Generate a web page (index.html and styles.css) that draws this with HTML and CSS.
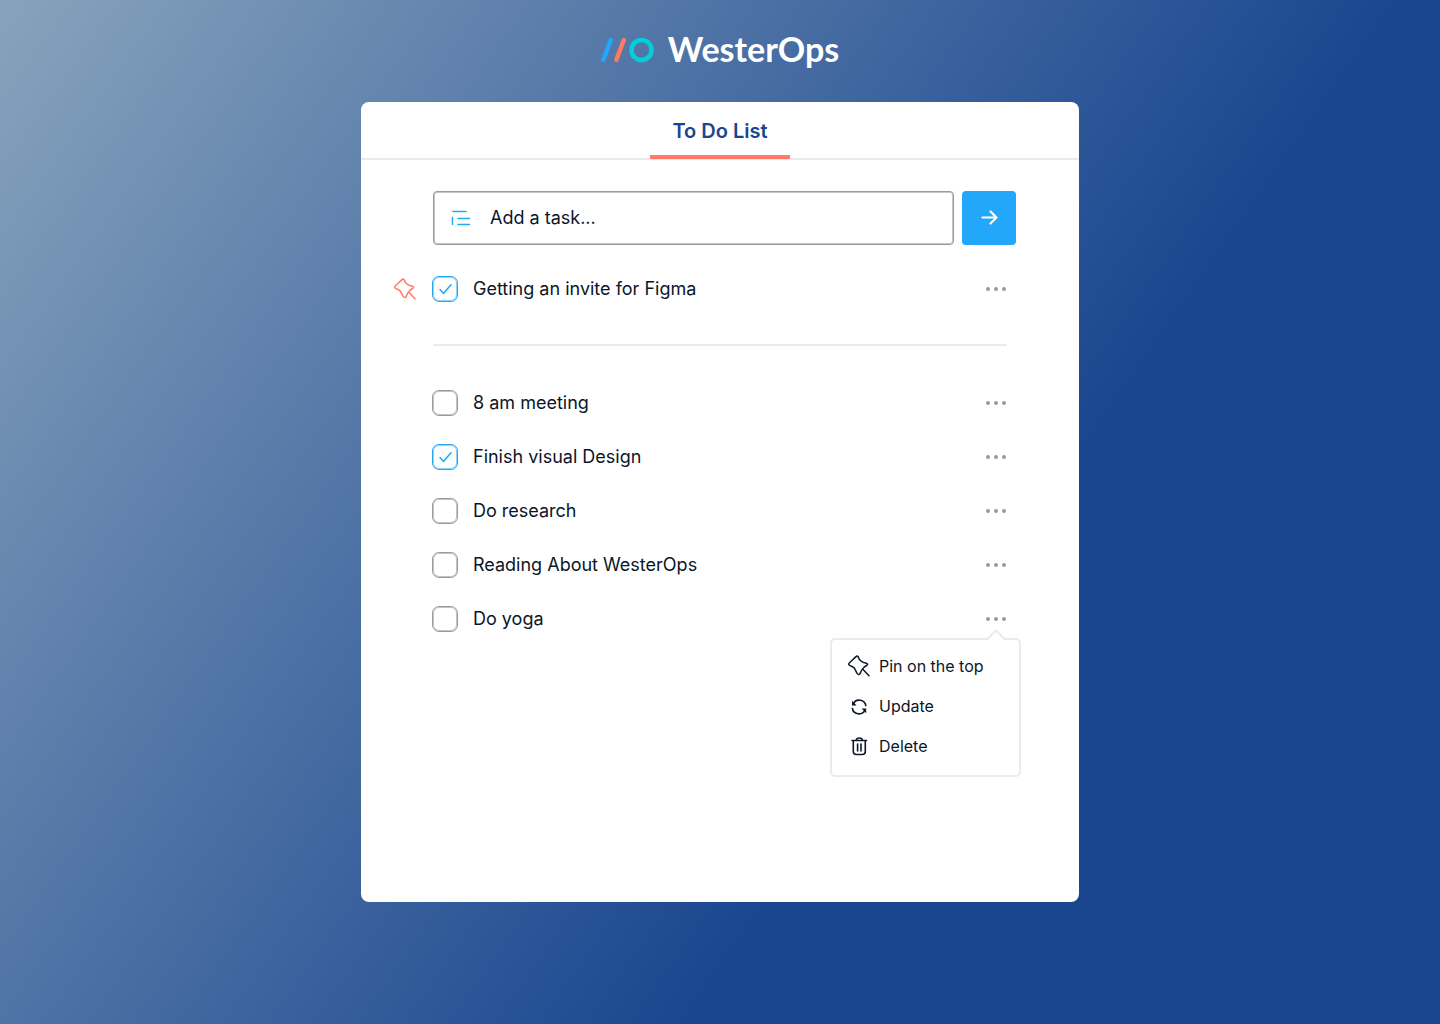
FILE: index.html
```html
<!DOCTYPE html>
<html lang="en">
<head>
<meta charset="utf-8">
<meta name="viewport" content="width=device-width, initial-scale=1">
<title>WesterOps – To Do List</title>
<link rel="stylesheet" href="styles.css">
</head>
<body>
<svg class="symbols" aria-hidden="true">
  <symbol id="pin" viewBox="0 0 24 24">
    <path d="M9 2.6C9.8 1.8 10.8 1.9 11.2 2.9C12.2 6 14 8 19.3 9.2C20.9 9.7 21 10.7 19.8 11.4L17.3 13C15.2 14.5 14.4 16.5 13.3 19.1C12.6 20.7 11.3 20.9 10.3 19.6C8.2 17 8.4 14 6 13L3.1 11.6C1.5 10.9 1.2 9.9 2.4 8.8C4.8 6.5 6.6 5 9 2.6ZM15.6 15L22 21.7" fill="none" stroke="currentColor" stroke-width="1.5" stroke-linejoin="round" stroke-linecap="round"/>
  </symbol>
  <symbol id="dots" viewBox="0 0 20 4">
    <g fill="currentColor"><circle cx="2" cy="2" r="2"/><circle cx="10" cy="2" r="2"/><circle cx="18" cy="2" r="2"/></g>
  </symbol>
</svg>

<header class="brand">
  <svg class="brand-mark" viewBox="0 0 53 26" aria-hidden="true">
    <path d="M2.4 22.8L9.8 3" stroke="#22a7fa" stroke-width="4.4" stroke-linecap="round"/>
    <path d="M15.4 22.8L22.8 3" stroke="#ff7964" stroke-width="4.4" stroke-linecap="round"/>
    <circle cx="40.5" cy="13" r="10" fill="none" stroke="#03cfdc" stroke-width="4.6"/>
  </svg>
  <span class="brand-name">WesterOps</span>
</header>

<main class="card">
  <div class="card-head"><h1 class="title">To Do List</h1></div>
  <div class="content">
    <form class="add">
      <div class="field">
        <svg class="field-icon" viewBox="0 0 20 16" aria-hidden="true"><path d="M2 1.5H15M7 8.5H18.5M7 14.5H18.5M1.5 7.5V14.5" fill="none" stroke="currentColor" stroke-width="1.5" stroke-linecap="round"/></svg>
        <input class="field-input" type="text" placeholder="Add a task..." aria-label="Add a task">
      </div>
      <button class="send" type="submit" aria-label="Add">
        <svg class="send-icon" viewBox="0 0 18 16" aria-hidden="true"><path d="M2.5 7.5H16.5M10.5 1.5L16.5 7.5L10.5 13.5" fill="none" stroke="currentColor" stroke-width="2.2" stroke-linecap="round" stroke-linejoin="round"/></svg>
      </button>
    </form>

    <ul class="tasks pinned">
      <li class="task">
        <svg class="task-pin" aria-hidden="true"><use href="#pin"/></svg>
        <label class="task-label"><input class="check" type="checkbox" checked>Getting an invite for Figma</label>
        <button class="more" type="button" aria-label="Options"><svg class="more-icon"><use href="#dots"/></svg></button>
      </li>
    </ul>

    <ul class="tasks">
      <li class="task">
        <label class="task-label"><input class="check" type="checkbox">8 am meeting</label>
        <button class="more" type="button" aria-label="Options"><svg class="more-icon"><use href="#dots"/></svg></button>
      </li>
      <li class="task">
        <label class="task-label"><input class="check" type="checkbox" checked>Finish visual Design</label>
        <button class="more" type="button" aria-label="Options"><svg class="more-icon"><use href="#dots"/></svg></button>
      </li>
      <li class="task">
        <label class="task-label"><input class="check" type="checkbox">Do research</label>
        <button class="more" type="button" aria-label="Options"><svg class="more-icon"><use href="#dots"/></svg></button>
      </li>
      <li class="task">
        <label class="task-label"><input class="check" type="checkbox">Reading About WesterOps</label>
        <button class="more" type="button" aria-label="Options"><svg class="more-icon"><use href="#dots"/></svg></button>
      </li>
      <li class="task">
        <label class="task-label"><input class="check" type="checkbox">Do yoga</label>
        <button class="more" type="button" aria-label="Options" aria-expanded="true"><svg class="more-icon"><use href="#dots"/></svg></button>
        <div class="menu">
          <svg class="menu-arrow" viewBox="0 0 20 11" aria-hidden="true"><path d="M1 11V10L10 1L19 10V11Z" fill="#fff"/><path d="M0 10H1.5L10 1.5L18.5 10H20" fill="none" stroke="#ebebeb" stroke-width="2" stroke-linejoin="round"/></svg>
          <button class="menu-item" type="button"><svg class="menu-icon" aria-hidden="true"><use href="#pin"/></svg>Pin on the top</button>
          <button class="menu-item" type="button">
            <svg class="menu-icon" viewBox="0 0 24 24" aria-hidden="true"><path d="M6.2 10A6.7 6.7 0 0 1 18.9 12.2M5.3 13.8A6.7 6.7 0 0 0 18 16" fill="none" stroke="currentColor" stroke-width="1.6"/><path d="M5 6.8V11.4H9.6ZM19.2 19.2V14.6H14.6Z" fill="currentColor"/></svg>Update</button>
          <button class="menu-item" type="button">
            <svg class="menu-icon" viewBox="0 0 24 24" aria-hidden="true"><path d="M5 6.5H19.5M6.3 6.5V17.5Q6.3 20.5 9.3 20.5H15.3Q18.3 20.5 18.3 17.5V6.5M9.3 6Q9.6 4 12.3 4T15.3 6M10.6 10V17M14 10V17" fill="none" stroke="currentColor" stroke-width="1.6" stroke-linecap="round"/></svg>Delete</button>
        </div>
      </li>
    </ul>
  </div>
</main>
</body>
</html>
```
FILE: styles.css
```css
* { box-sizing: border-box; }

body {
  margin: 0;
  min-height: 100vh;
  padding: 31px 24px 122px;
  display: flex;
  flex-direction: column;
  align-items: center;
  font-family: Inter, "Liberation Sans", sans-serif;
  font-size: 18px;
  line-height: 26px;
  color: #0b1629;
  background: linear-gradient(125deg, #87a3bc 0%, #1a4690 65%);
}

button, input { font: inherit; color: inherit; }
button { padding: 0; border: 0; background: none; cursor: pointer; }
.symbols { display: none; }

.brand {
  display: flex;
  align-items: center;
  gap: 14px;
  height: 38px;
  margin-bottom: 33px;
  color: #fff;
}
.brand-mark { width: 53px; height: 26px; }
.brand-name {
  padding-bottom: 2px;
  font-family: Lato, sans-serif;
  font-size: 34px;
  font-weight: 700;
  line-height: 38px;
}

.card {
  width: 100%;
  max-width: 718px;
  min-height: 800px;
  background: #fff;
  border-radius: 8px;
}
.card-head {
  display: flex;
  justify-content: center;
  border-bottom: 2px solid #ebebeb;
}
.title {
  width: 140px;
  margin: 0 0 -1px;
  padding: 16px 0 11px;
  border-bottom: 4px solid #ff7964;
  font-size: 20px;
  font-weight: 600;
  line-height: 26px;
  text-align: center;
  color: #1a4690;
}
.content { padding: 31px 72px 32px; }

.add { display: flex; gap: 8px; margin-right: -9px; }
.field {
  flex: 1;
  display: flex;
  align-items: center;
  gap: 19px;
  height: 54px;
  padding: 0 17px;
  border: 1px solid #999b9f;
  border-radius: 4px;
  box-shadow: inset 0 0 0 1px #c4c5c8;
}
.field-icon { width: 20px; height: 16px; color: #22a7fa; }
.field-input { flex: 1; min-width: 0; padding: 0; border: 0; outline: 0; background: none; }
.field-input::placeholder { color: #0b1629; opacity: 1; }
.send {
  display: grid;
  place-items: center;
  width: 54px;
  height: 54px;
  border-radius: 4px;
  background: #22a7fa;
  color: #fff;
}
.send-icon { width: 18px; height: 16px; }

.tasks {
  display: flex;
  flex-direction: column;
  gap: 28px;
  margin: 0;
  padding: 44px 0 0;
  list-style: none;
}
.pinned { padding: 31px 0 42px; border-bottom: 2px solid #ebebeb; }
.task { position: relative; display: flex; align-items: center; justify-content: space-between; }
.task-label { display: flex; align-items: center; gap: 15px; margin-left: -1px; }
.task-pin { position: absolute; left: -40px; top: 1px; width: 24px; height: 24px; color: #ff7964; }
.check {
  appearance: none;
  width: 26px;
  height: 26px;
  margin: 0;
  border: 1px solid #999b9f;
  border-radius: 7px;
  box-shadow: inset 0 0 0 1px #c4c5c8;
  background: center / 22px 22px no-repeat;
}
.check:checked {
  border-color: #22a7fa;
  box-shadow: inset 0 0 0 1px #8fd2fc;
  background-image: url("data:image/svg+xml,%3Csvg xmlns='http://www.w3.org/2000/svg' viewBox='0 0 22 22'%3E%3Cpath d='M6 11.5L9.5 15.5L17 6.8' fill='none' stroke='%2322a7fa' stroke-width='1.5' stroke-linecap='round' stroke-linejoin='round'/%3E%3C/svg%3E");
}
.more { display: grid; place-items: center; height: 26px; color: #999b9f; }
.more-icon { width: 22px; height: 4px; }

.menu {
  position: absolute;
  top: 32px;
  right: -14px;
  width: 191px;
  padding: 13px 15px 16px;
  display: flex;
  flex-direction: column;
  gap: 14px;
  border: 2px solid #ebebeb;
  border-radius: 5px;
  background: #fff;
}
.menu-arrow { position: absolute; top: -11px; right: 13px; width: 20px; height: 11px; }
.menu-item {
  display: flex;
  align-items: center;
  gap: 8px;
  font-size: 16px;
  line-height: 26px;
}
.menu-icon { width: 24px; height: 24px; }
```
